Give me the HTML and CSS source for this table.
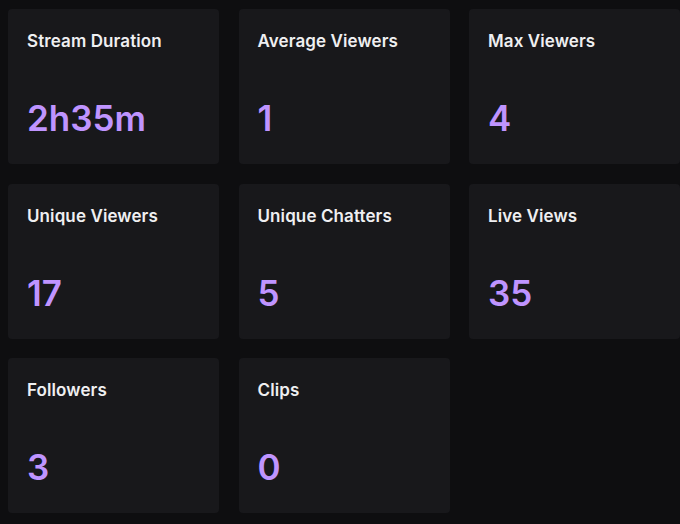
FILE: index.html
```html
<!DOCTYPE html>
<html lang="en">
<head>
<meta charset="utf-8">
<title>Stream Stats</title>
<link rel="stylesheet" href="styles.css">
</head>
<body>
<div class="grid">
  <div class="card"><div class="label">Stream Duration</div><div class="value">2h35m</div></div>
  <div class="card"><div class="label">Average Viewers</div><div class="value">1</div></div>
  <div class="card"><div class="label">Max Viewers</div><div class="value">4</div></div>
  <div class="card"><div class="label">Unique Viewers</div><div class="value">17</div></div>
  <div class="card"><div class="label">Unique Chatters</div><div class="value">5</div></div>
  <div class="card"><div class="label">Live Views</div><div class="value">35</div></div>
  <div class="card"><div class="label">Followers</div><div class="value">3</div></div>
  <div class="card"><div class="label">Clips</div><div class="value">0</div></div>
</div>
</body>
</html>
```
FILE: styles.css
```css
html, body {
  margin: 0;
  padding: 0;
  background: #0e0e10;
  overflow: hidden;
}
body {
  font-family: Inter, "Noto Sans", sans-serif;
  width: 680px;
  height: 524px;
}
.grid {
  display: grid;
  grid-template-columns: repeat(3, 211px);
  grid-auto-rows: 155px;
  column-gap: 19.5px;
  row-gap: 19.5px;
  padding: 9px 0 0 8px;
}
.card {
  background: #18181b;
  border-radius: 4px;
  display: flex;
  flex-direction: column;
  padding: 20px 18px 25px 19px;
  box-sizing: border-box;
}
.label {
  color: #efeff1;
  font-size: 17px;
  line-height: 24px;
  font-weight: 600;
  letter-spacing: 0.1px;
}
.value {
  margin-top: auto;
  color: #bf94ff;
  font-size: 35px;
  line-height: 42px;
  font-weight: 600;
}
```
